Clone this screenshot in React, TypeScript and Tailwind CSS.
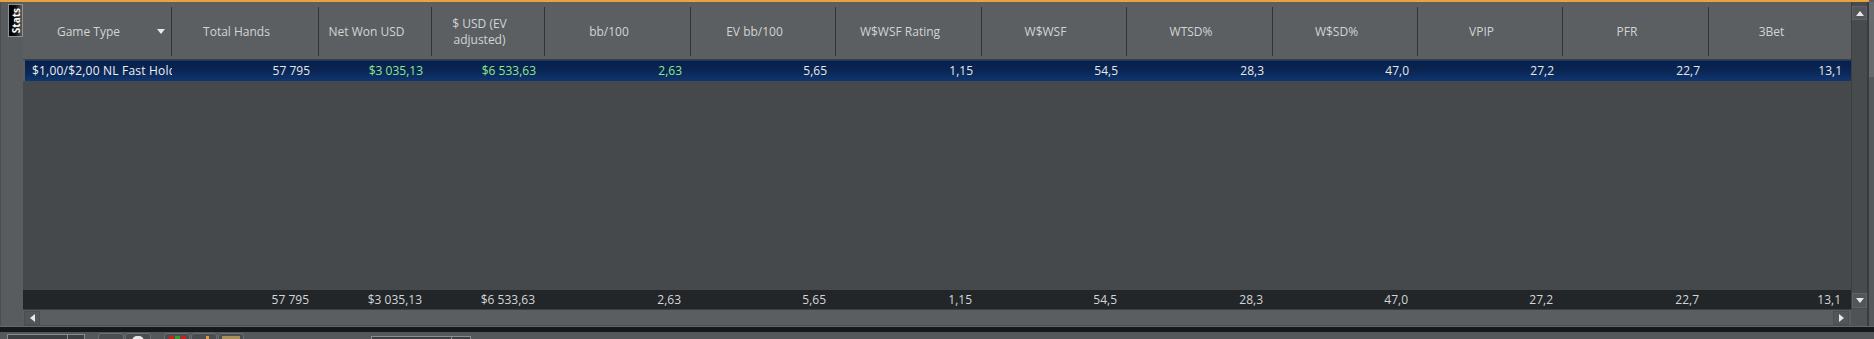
import React from 'react';

type Col = {
  label: React.ReactNode;
  w: string;
  rw: string;
  v: string;
  t: string;
  green?: boolean;
  arrow?: boolean;
  last?: boolean;
};

const cols: Col[] = [
  { label: 'Game Type', w: 'w-[149px]', rw: 'w-[147px]', v: '$1,00/$2,00 NL Fast Holdem', t: '', arrow: true },
  { label: 'Total Hands', w: 'w-[147px]', rw: 'w-[147px]', v: '57 795', t: '57 795' },
  { label: 'Net Won USD', w: 'w-[113px]', rw: 'w-[113px]', v: '$3 035,13', t: '$3 035,13', green: true },
  {
    label: (
      <>
        $ USD (EV
        <br />
        adjusted)
      </>
    ),
    w: 'w-[113px]',
    rw: 'w-[113px]',
    v: '$6 533,63',
    t: '$6 533,63',
    green: true,
  },
  { label: 'bb/100', w: 'w-[146px]', rw: 'w-[146px]', v: '2,63', t: '2,63', green: true },
  { label: 'EV bb/100', w: 'w-[145px]', rw: 'w-[145px]', v: '5,65', t: '5,65' },
  { label: 'W$WSF Rating', w: 'w-[146px]', rw: 'w-[146px]', v: '1,15', t: '1,15' },
  { label: 'W$WSF', w: 'w-[145px]', rw: 'w-[145px]', v: '54,5', t: '54,5' },
  { label: 'WTSD%', w: 'w-[146px]', rw: 'w-[146px]', v: '28,3', t: '28,3' },
  { label: 'W$SD%', w: 'w-[145px]', rw: 'w-[145px]', v: '47,0', t: '47,0' },
  { label: 'VPIP', w: 'w-[145px]', rw: 'w-[145px]', v: '27,2', t: '27,2' },
  { label: 'PFR', w: 'w-[146px]', rw: 'w-[146px]', v: '22,7', t: '22,7' },
  { label: '3Bet', w: 'w-[142px]', rw: 'w-[142px]', v: '13,1', t: '13,1', last: true },
];

function Tri({ dir, className }: { dir: 'up' | 'down' | 'left' | 'right'; className?: string }) {
  const pts: Record<string, string> = {
    up: '0,5 4,0 8,5',
    down: '0,0 8,0 4,5',
    left: '5,0 5,8 0,4',
    right: '0,0 0,8 5,4',
  };
  const vb = dir === 'up' || dir === 'down' ? '0 0 8 5' : '0 0 5 8';
  const w = dir === 'up' || dir === 'down' ? 8 : 5;
  const h = dir === 'up' || dir === 'down' ? 5 : 8;
  return (
    <svg width={w} height={h} viewBox={vb} className={className}>
      <polygon points={pts[dir]} fill="#e8e8e8" />
    </svg>
  );
}

export default function App() {
  return (
    <div className="w-[1874px] h-[339px] overflow-hidden bg-[#5a5e61] flex flex-col font-['Open_Sans',sans-serif] text-[12px] select-none">
      {/* top orange bar */}
      <div className="flex h-[2px] shrink-0">
        <div className="flex-1 bg-[#e8a23e]" />
        <div className="w-[5px] bg-[#5a5e61]" />
      </div>

      {/* main */}
      <div className="flex h-[324px] shrink-0">
        {/* left strip */}
        <div className="w-[23px] flex shrink-0">
          <div className="w-px bg-[#4b4f52]" />
          <div className="flex-1 bg-[#585c5f] flex flex-col">
            <div className="ml-[7px] mt-[2px] w-[15px] h-[33px] border border-[#8e9194] bg-gradient-to-r from-black via-[#111] to-[#5c5c5c] flex items-center justify-center">
              <span className="[writing-mode:vertical-rl] rotate-180 text-white font-bold text-[10px] leading-[10px]">
                Stats
              </span>
            </div>
          </div>
        </div>

        {/* table */}
        <div className="w-[1828px] flex flex-col shrink-0">
          {/* header */}
          <div className="flex h-[58px] bg-[#5b5f62] border-b border-[#3c4043] shrink-0">
            {cols.map((c, i) => (
              <div key={i} className={`${c.w} flex shrink-0`}>
                <div className="flex-1 flex items-center justify-center text-center text-[#d2d4d5] leading-[16px] pt-[2px]">
                  {c.label}
                </div>
                <div className="w-[17px] flex items-center pt-[2px]">
                  {c.arrow ? <Tri dir="down" className="ml-[3px]" /> : null}
                </div>
                {c.last ? null : <div className="w-px h-[49px] mt-[5px] bg-[#303437]" />}
              </div>
            ))}
          </div>

          {/* selected row */}
          <div className="flex h-[21px] ml-[2px] shrink-0 bg-gradient-to-b from-[#081f4b] via-[#0a2654] to-[#0f3670] border-t border-[#1a3766]">
            {cols.map((c, i) =>
              i === 0 ? (
                <div
                  key={i}
                  className={`${c.rw} shrink-0 overflow-hidden whitespace-nowrap pl-[7px] pr-[2px] flex items-center text-[#eef0f2] tracking-[0.2px]`}
                >
                  {c.v}
                </div>
              ) : (
                <div
                  key={i}
                  className={`${c.rw} shrink-0 flex items-center justify-end pr-[9px] whitespace-nowrap ${
                    c.green ? 'text-[#8ee88c]' : 'text-[#e6e8ea]'
                  }`}
                >
                  {c.v}
                </div>
              )
            )}
          </div>

          {/* empty body */}
          <div className="flex-1 bg-[#45494c]" />

          {/* totals */}
          <div className="flex h-[19px] bg-[#222629] shrink-0">
            {cols.map((c, i) => (
              <div
                key={i}
                className={`${c.w} shrink-0 flex items-center justify-end pr-[10px] whitespace-nowrap text-[#d4d6d8]`}
              >
                {c.t}
              </div>
            ))}
          </div>

          {/* horizontal scrollbar */}
          <div className="h-[17px] shrink-0 border-t border-[#3a3e41] bg-[#5a5e61] flex items-center pl-px pr-px border-b border-b-[#4c5053]">
            <div className="w-[16px] h-[14px] bg-[#52565a] border border-[#4a4e51] flex items-center justify-center">
              <Tri dir="left" />
            </div>
            <div className="flex-1" />
            <div className="w-[16px] h-[14px] bg-[#52565a] border border-[#4a4e51] flex items-center justify-center mr-[1px]">
              <Tri dir="right" />
            </div>
          </div>
        </div>

        {/* vertical scrollbar */}
        <div className="w-[16px] flex flex-col shrink-0">
          <div className="h-[307px] bg-[#474b4e] border-l border-[#3b3f42] flex flex-col items-center pt-[4px] pb-[1px]">
            <div className="w-[15px] h-[14px] bg-[#52565a] border border-[#5f6366] flex items-center justify-center">
              <Tri dir="up" />
            </div>
            <div className="flex-1" />
            <div className="w-[15px] h-[15px] bg-[#52565a] border border-[#5f6366] flex items-center justify-center">
              <Tri dir="down" />
            </div>
          </div>
          <div className="flex-1 bg-[#4f5356]" />
        </div>

        {/* right edge */}
        <div className="w-[7px] flex shrink-0">
          <div className="w-[2px] bg-[#383c3f]" />
          <div className="flex-1 flex flex-col bg-[#55595c]">
            <div className="h-[75px] bg-[#676b6e]" />
          </div>
        </div>
      </div>

      {/* bottom separators */}
      <div className="h-px bg-[#64686b] shrink-0" />
      <div className="h-[5px] bg-[#15191b] shrink-0" />

      {/* toolbar (mostly clipped) */}
      <div className="h-[30px] bg-[#54585b] flex items-start shrink-0">
        <div className="ml-[7px] mt-[2px] w-[78px] h-[22px] border border-[#8a8d90] bg-[#3d4043] flex">
          <div className="w-[60px] border-r border-[#8a8d90]" />
        </div>
        <div className="ml-[13px] mt-[1px] flex gap-px">
          <div className="w-[26px] h-[22px] rounded-t-[3px] border border-[#6b6f72] bg-[#4a4e51]" />
          <div className="w-[26px] h-[22px] rounded-t-[3px] border border-[#6b6f72] bg-[#4a4e51] flex justify-center">
            <div className="mt-[2px] w-[12px] h-[10px] rounded-full bg-[#e8e8e8]" />
          </div>
        </div>
        <div className="ml-[13px] mt-[1px] flex gap-px">
          <div className="w-[26px] h-[22px] rounded-t-[3px] border border-[#6b6f72] bg-[#4a4e51] flex justify-center gap-px pt-[2px]">
            <div className="w-[5px] h-[8px] bg-[#c8201c]" />
            <div className="w-[5px] h-[8px] bg-[#2fa02a]" />
            <div className="w-[5px] h-[8px] bg-[#c8201c]" />
          </div>
          <div className="w-[26px] h-[22px] rounded-t-[3px] border border-[#6b6f72] bg-[#4a4e51] flex justify-center pt-[2px]">
            <div className="ml-[6px] w-[3px] h-[8px] bg-[#e09a40]" />
          </div>
          <div className="w-[26px] h-[22px] rounded-t-[3px] border border-[#6b6f72] bg-[#4a4e51] flex justify-center pt-[2px]">
            <div className="w-[18px] h-[10px] bg-[#a8905a]" />
          </div>
        </div>
        <div className="ml-[127px] mt-[4px] w-[100px] h-[22px] border border-[#8a8d90] bg-[#3d4043] flex">
          <div className="w-[80px] border-r border-[#8a8d90]" />
        </div>
      </div>
    </div>
  );
}
